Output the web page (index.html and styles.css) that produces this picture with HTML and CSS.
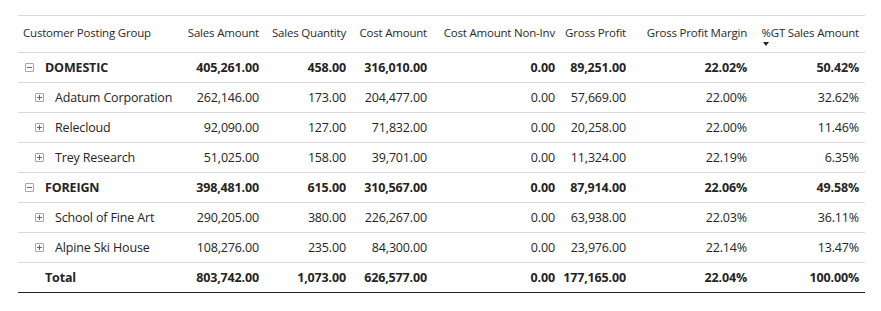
FILE: index.html
```html
<!DOCTYPE html>
<html>
<head>
<meta charset="utf-8">
<link rel="stylesheet" href="styles.css">
</head>
<body>
<div class="page">
<table class="matrix">
  <colgroup>
    <col class="c1"><col class="c2"><col class="c3"><col class="c4"><col class="c5"><col class="c6"><col class="c7"><col class="c8">
  </colgroup>
  <thead>
    <tr>
      <th class="first">Customer Posting Group</th>
      <th>Sales Amount</th>
      <th>Sales Quantity</th>
      <th>Cost Amount</th>
      <th>Cost Amount Non-Inv</th>
      <th>Gross Profit</th>
      <th>Gross Profit Margin</th>
      <th class="sorted"><span class="hlabel">%GT Sales Amount<span class="sort-arrow"></span></span></th>
    </tr>
  </thead>
  <tbody>
    <tr class="group">
      <td class="first"><span class="toggle minus"></span><span class="name">DOMESTIC</span></td>
      <td>405,261.00</td><td>458.00</td><td>316,010.00</td><td>0.00</td><td>89,251.00</td><td>22.02%</td><td>50.42%</td>
    </tr>
    <tr class="child">
      <td class="first"><span class="toggle plus"></span><span class="name">Adatum Corporation</span></td>
      <td>262,146.00</td><td>173.00</td><td>204,477.00</td><td>0.00</td><td>57,669.00</td><td>22.00%</td><td>32.62%</td>
    </tr>
    <tr class="child">
      <td class="first"><span class="toggle plus"></span><span class="name">Relecloud</span></td>
      <td>92,090.00</td><td>127.00</td><td>71,832.00</td><td>0.00</td><td>20,258.00</td><td>22.00%</td><td>11.46%</td>
    </tr>
    <tr class="child">
      <td class="first"><span class="toggle plus"></span><span class="name">Trey Research</span></td>
      <td>51,025.00</td><td>158.00</td><td>39,701.00</td><td>0.00</td><td>11,324.00</td><td>22.19%</td><td>6.35%</td>
    </tr>
    <tr class="group">
      <td class="first"><span class="toggle minus"></span><span class="name">FOREIGN</span></td>
      <td>398,481.00</td><td>615.00</td><td>310,567.00</td><td>0.00</td><td>87,914.00</td><td>22.06%</td><td>49.58%</td>
    </tr>
    <tr class="child">
      <td class="first"><span class="toggle plus"></span><span class="name">School of Fine Art</span></td>
      <td>290,205.00</td><td>380.00</td><td>226,267.00</td><td>0.00</td><td>63,938.00</td><td>22.03%</td><td>36.11%</td>
    </tr>
    <tr class="child">
      <td class="first"><span class="toggle plus"></span><span class="name">Alpine Ski House</span></td>
      <td>108,276.00</td><td>235.00</td><td>84,300.00</td><td>0.00</td><td>23,976.00</td><td>22.14%</td><td>13.47%</td>
    </tr>
    <tr class="total">
      <td class="first"><span class="name">Total</span></td>
      <td>803,742.00</td><td>1,073.00</td><td>626,577.00</td><td>0.00</td><td>177,165.00</td><td>22.04%</td><td>100.00%</td>
    </tr>
  </tbody>
</table>
</div>
</body>
</html>
```
FILE: styles.css
```css
html, body {
  margin: 0;
  padding: 0;
  background: #ffffff;
}
body {
  font-family: "Open Sans", "Noto Sans", sans-serif;
  color: #252423;
}
.page {
  padding: 15px 16px 0 18px;
}
.matrix {
  border-collapse: collapse;
  table-layout: fixed;
  width: 847px;
}
.c1 { width: 164px; }
.c2 { width: 83px; }
.c3 { width: 87px; }
.c4 { width: 81px; }
.c5 { width: 128px; }
.c6 { width: 71px; }
.c7 { width: 121px; }
.c8 { width: 112px; }

.matrix thead tr {
  border-top: 1px solid #d9d9d9;
  border-bottom: 1px solid #d9d9d9;
}
.matrix th {
  height: 32px;
  font-size: 11.5px;
  font-weight: 400;
  color: #2b2a29;
  text-align: right;
  padding: 0 6px 4px 0;
  white-space: nowrap;
  vertical-align: middle;
  letter-spacing: -0.2px;
}
.matrix th.first {
  text-align: left;
  padding-left: 5px;
}
.hlabel {
  position: relative;
  display: inline-block;
}
.sort-arrow {
  position: absolute;
  left: 2px;
  bottom: -6px;
  width: 0;
  height: 0;
  border-left: 3.5px solid transparent;
  border-right: 3.5px solid transparent;
  border-top: 4px solid #252423;
}
.matrix td {
  height: 29px;
  font-size: 12.5px;
  text-align: right;
  padding: 0 6px 0 0;
  white-space: nowrap;
  border-bottom: 1px solid #d9d9d9;
  letter-spacing: -0.15px;
}
.matrix td.first {
  text-align: left;
  padding-left: 0;
}
.matrix tr.group td,
.matrix tr.total td {
  font-weight: 700;
}
.matrix tr.total td {
  border-bottom: 1px solid #252423;
}
.toggle {
  display: inline-block;
  vertical-align: middle;
  position: relative;
  width: 7px;
  height: 7px;
  border: 1px solid #a6a6a6;
  border-radius: 1px;
  margin-top: -2px;
}
.toggle::before {
  content: "";
  position: absolute;
  left: 1px;
  right: 1px;
  top: 3px;
  height: 1px;
  background: #666666;
}
.toggle.plus::after {
  content: "";
  position: absolute;
  top: 1px;
  bottom: 1px;
  left: 3px;
  width: 1px;
  background: #666666;
}
.group .toggle { margin-left: 7px; margin-right: 11px; }
.child .toggle { margin-left: 17px; margin-right: 11px; }
.total .name { padding-left: 27px; }
```
